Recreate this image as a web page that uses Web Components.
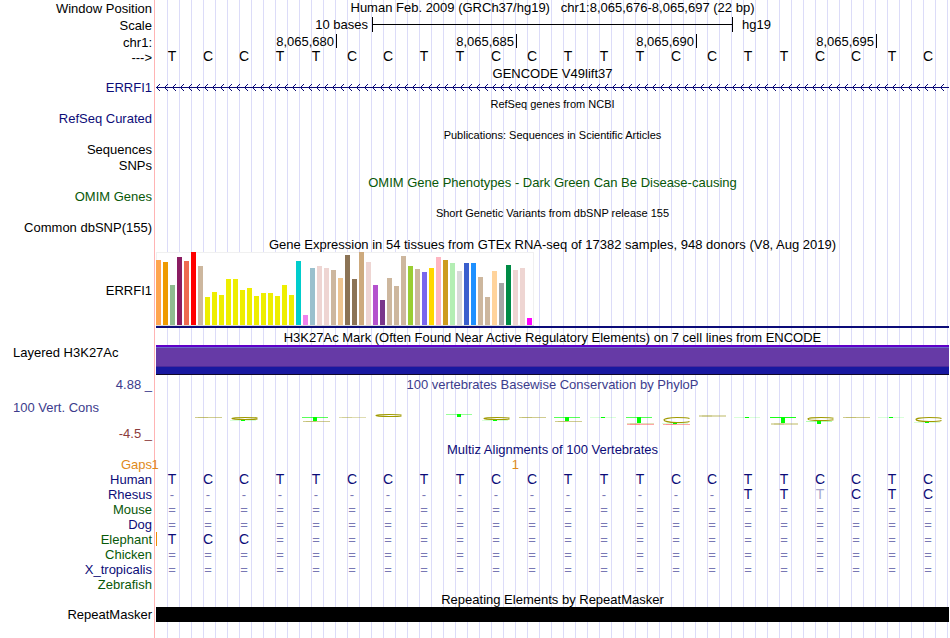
<!DOCTYPE html>
<html lang="en">
<head>
<meta charset="utf-8">
<title>Genome Browser</title>
<style>
body {
    margin: 0;
    background-color: #fff;
    font: 13px/15px "Liberation Sans", Arial, sans-serif;
    color: #000;
}
</style>
</head>
<body>
<genome-browser></genome-browser>

<script>
const COLUMNS = 22;
const SEQUENCE = "TCCTTCCTTCCTTTCCTTCCTC";

function makeTemplate(html) {
    let template = document.createElement("template");
    template.innerHTML = html;
    return template;
}

/* One line of the image: a label on the left, track data on the guide lines */
const rowTemplate = makeTemplate(`
<style>
:host {
    display: grid;
    grid-template-columns: 155px minmax(0, 1fr);
    column-gap: 1px;
    min-height: 15px;
}

:host([size="title"]), :host([size="heading"]) {
    min-height: 16px;
}

:host([size="ruler"]) {
    min-height: 17px;
}

:host([fill]) {
    flex: 1;
}

#label {
    border-right: 1px solid #ffb4b4;
    padding: 0 2px 0 13px;
    text-align: right;
    white-space: nowrap;
    display: flex;
    flex-direction: column;
    justify-content: center;
}

:host([size="ruler"]) #label {
    justify-content: flex-end;
}

:host([size="item"]) #label {
    justify-content: flex-start;
    line-height: 13px;
}

:host([label-align="left"]) #label {
    text-align: left;
    justify-content: flex-start;
}

:host([tone="navy"]) {
    color: #0c0c78;
}

:host([tone="green"]) {
    color: #085808;
}

:host([tone="orange"]) {
    color: #e08a1a;
}

:host([tone="slate"]) {
    color: #3c3c8c;
}

#data {
    position: relative;
    background: linear-gradient(90deg, transparent 11px, #dcdcf8 11px) 0 0 / 12px 100%;
}

:host([size="title"]) #data {
    padding-top: 1px;
    text-align: center;
}

:host([size="heading"]) #data {
    text-align: center;
}

:host([small]) #data {
    font-size: 11px;
}
</style>
<div id="label"><slot name="label"></slot></div>
<div id="data"><slot></slot></div>
`);

class TrackRow extends HTMLElement {
    constructor() {
        super();
        this.attachShadow({mode: "open"});
        this.shadowRoot.appendChild(rowTemplate.content.cloneNode(true));
    }
}

window.customElements.define("track-row", TrackRow);

/* Bases, one per column. Lower case marks a mismatch. */
const basesTemplate = makeTemplate(`
<style>
:host {
    display: grid;
    grid-template-columns: repeat(${COLUMNS}, 1fr);
    padding-right: 1px;
}

:host([raised]) {
    line-height: 13px;
}

span {
    padding-right: 4px;
    text-align: center;
    font-size: 14px;
}

.gap {
    font-size: 13px;
    color: #7878b4;
}

.faint {
    color: #a5a5cd;
}
</style>
`);

class BaseRow extends HTMLElement {
    constructor() {
        super();
        this.attachShadow({mode: "open"});
    }

    connectedCallback() {
        this.shadowRoot.replaceChildren(basesTemplate.content.cloneNode(true));

        for (let base of this.getAttribute("bases")) {
            let cell = document.createElement("span");
            cell.textContent = base.toUpperCase();
            if (base === "-" || base === "=") {
                cell.className = "gap";
            }
            else if (base !== base.toUpperCase()) {
                cell.className = "faint";
            }
            this.shadowRoot.appendChild(cell);
        }
    }
}

window.customElements.define("base-row", BaseRow);

class ScaleBar extends HTMLElement {
    constructor() {
        super();
        this.attachShadow({mode: "open"});
        this.shadowRoot.innerHTML = `
<style>
:host {
    display: grid;
    grid-template-columns: repeat(${COLUMNS}, 1fr);
    align-items: center;
    height: 17px;
    padding-right: 1px;
}

#length {
    grid-column: 1 / 7;
    padding-right: 4px;
    text-align: right;
}

#bar {
    grid-column: 7 / 17;
    height: 15px;
    margin-right: -1px;
    box-sizing: border-box;
    border: solid #000;
    border-width: 0 1px;
    background: linear-gradient(#000, #000) 0 7px / 100% 1px no-repeat;
}

#assembly {
    grid-column: 17 / 23;
    padding-left: 10px;
}
</style>
<span id="length"><slot name="length"></slot></span>
<span id="bar"></span>
<span id="assembly"><slot name="assembly"></slot></span>
`;
    }
}

window.customElements.define("scale-bar", ScaleBar);

class PositionRuler extends HTMLElement {
    constructor() {
        super();
        this.attachShadow({mode: "open"});
        this.shadowRoot.innerHTML = `
<style>
:host {
    display: grid;
    grid-template-columns: repeat(${COLUMNS}, 1fr);
    padding: 1px 1px 0 0;
}

span {
    grid-column: span 5;
    margin-right: -1px;
    padding-right: 2px;
    border-right: 1px solid #000;
    text-align: right;
    line-height: 15px;
    height: 14px;
}
</style>
<span>8,065,680</span>
<span>8,065,685</span>
<span>8,065,690</span>
<span>8,065,695</span>
`;
    }
}

window.customElements.define("position-ruler", PositionRuler);

/* Intron line with arrows for the minus strand */
class GeneLine extends HTMLElement {
    constructor() {
        super();
        this.attachShadow({mode: "open"});
        this.shadowRoot.innerHTML = `
<style>
:host, svg {
    display: block;
}
</style>
<svg width="100%" height="13" shape-rendering="crispEdges" aria-hidden="true">
    <defs>
        <pattern id="arrow" width="8" height="13" patternUnits="userSpaceOnUse">
            <path d="M0 6h8v1h-8z M1 5h1v1h-1z M1 7h1v1h-1z M2 4h1v1h-1z M2 8h1v1h-1z M3 3h1v1h-1z M3 9h1v1h-1z" fill="#0c0c78"/>
        </pattern>
    </defs>
    <rect width="100%" height="13" fill="url(#arrow)"/>
</svg>
`;
    }
}

window.customElements.define("gene-line", GeneLine);

/* GTEx: height and colour of each tissue bar */
const TISSUES = [
    [65, "#ffa54f"], [63, "#ee9a00"], [40, "#8fbc8f"], [68, "#8b1c62"], [64, "#ee6a50"], [73, "#ff0000"],
    [59, "#cdb79e"], [28, "#eeee00"], [33, "#eeee00"], [30, "#eeee00"], [46, "#eeee00"], [46, "#eeee00"],
    [35, "#eeee00"], [37, "#eeee00"], [29, "#eeee00"], [32, "#eeee00"], [32, "#eeee00"], [29, "#eeee00"],
    [40, "#eeee00"], [30, "#eeee00"], [64, "#00cdcd"], [10, "#ee82ee"], [57, "#9ac0cd"], [59, "#eed5d2"],
    [57, "#eed5d2"], [55, "#cdb79e"], [47, "#eec591"], [70, "#8b7355"], [46, "#8b7355"], [73, "#cdaa7d"],
    [63, "#eed5d2"], [40, "#b452cd"], [25, "#7a378b"], [47, "#cdb79e"], [39, "#cdb79e"], [69, "#cdb79e"],
    [59, "#9acd32"], [56, "#cdb79e"], [53, "#7a67ee"], [57, "#ffd700"], [68, "#ffb6c1"], [65, "#cd9b1d"],
    [62, "#b4eeb4"], [54, "#d9d9d9"], [62, "#3a5fcd"], [62, "#1e90ff"], [48, "#cdb79e"], [28, "#cdb79e"],
    [54, "#ffd39b"], [42, "#a6a6a6"], [60, "#008b45"], [55, "#eed5d2"], [57, "#eed5d2"], [7, "#ff00ff"]
];

class ExpressionChart extends HTMLElement {
    constructor() {
        super();
        this.attachShadow({mode: "open"});
    }

    connectedCallback() {
        let bars = TISSUES.map(([height, color], i) =>
            `<rect x="${i * 7}" y="${73 - height}" width="5" height="${height}" fill="${color}"/>`
        ).join("");

        this.shadowRoot.innerHTML = `
<style>
:host {
    display: block;
    height: 77px;
}

svg {
    display: block;
}

#gene {
    height: 2px;
    background-color: #0c0c78;
}
</style>
<svg width="378" height="74" shape-rendering="crispEdges" aria-hidden="true">
    <rect width="378" height="74" fill="#f0f0f0"/>
    <rect x="1" y="1" width="376" height="72" fill="#fff"/>
    <rect y="73" width="378" height="1" fill="#d8d8d8"/>
    ${bars}
</svg>
<div id="gene"></div>
`;
    }
}

window.customElements.define("expression-chart", ExpressionChart);

/* Conservation logo: shapes per column, in a 36 x 49 box */
function thinC(y, height) {
    let middle = y + height / 2;
    let bottom = y + height;
    let bulge = Math.min(1, height / 4);
    return `<path d="M29.5 ${y + bulge} C27 ${y} 22 ${y} 17 ${y} C9 ${y} 4 ${middle - bulge} 4 ${middle} C4 ${middle + bulge} 9 ${bottom} 17 ${bottom} C22 ${bottom} 27 ${bottom} 29.5 ${bottom - bulge}" fill="none" stroke="#a09a00" stroke-width="1.2"/>`;
}

function flat(y, color, height = 1, opacity = 0.5) {
    return `<path d="M3 ${y} h27 v${height} h-27z" fill="${color}" opacity="${opacity}"/>` +
        `<path d="M6 ${y} h10 v${height} h-10z" fill="${color}" opacity="${opacity / 2}"/>`;
}

function tee(y, height, opacity = 0.65) {
    return `<path d="M2 ${y} h26 v1 h-26z" fill="#00ff00" opacity="${opacity}"/>` +
        `<path d="M13 ${y} h4 v${height} h-4z" fill="#00ff00"/>`;
}

const OLIVE = "#a09a20";
const RED = "#ff5050";

const LOGO = {
    1: flat(25, OLIVE),
    2: thinC(25.5, 2) + tee(28, 1, 0.15),
    4: tee(25, 4) + flat(29, OLIVE, 1),
    5: flat(25, OLIVE, 1, 0.35),
    6: thinC(22.5, 2),
    8: tee(22, 3, 0.4),
    9: thinC(25.5, 2) + tee(28, 1, 0.15),
    10: flat(25, OLIVE),
    11: tee(25, 4) + flat(29, OLIVE, 1),
    12: tee(25, 1, 0.15),
    13: tee(25, 6) + flat(31, OLIVE, 1, 0.3) + flat(32, RED),
    14: thinC(25.5, 5) + tee(31, 1, 0.15) + flat(32, RED),
    15: flat(23, OLIVE, 2, 0.35),
    16: tee(25, 1, 0.15),
    17: tee(25, 6, 0.9) + flat(31, OLIVE, 2, 0.35),
    18: thinC(25.5, 3) + tee(29, 3, 0.3),
    19: flat(25, OLIVE),
    20: tee(25, 1, 0.15),
    21: thinC(25.5, 4) + tee(30, 1, 0.15)
};

class ConservationLogo extends HTMLElement {
    constructor() {
        super();
        this.attachShadow({mode: "open"});
    }

    connectedCallback() {
        let cells = "";
        for (let i = 0; i < COLUMNS; i++) {
            cells += `<svg width="36" height="49" aria-hidden="true">${LOGO[i] || ""}</svg>`;
        }

        this.shadowRoot.innerHTML = `
<style>
:host {
    display: grid;
    grid-template-columns: repeat(${COLUMNS}, 1fr);
    padding-right: 1px;
}

svg {
    display: block;
}
</style>
${cells}
`;
    }
}

window.customElements.define("conservation-logo", ConservationLogo);

/* Insert marks stand on the border between two bases */
class InsertMark extends HTMLElement {
    constructor() {
        super();
        this.attachShadow({mode: "open"});
        this.shadowRoot.innerHTML = `
<style>
:host {
    position: absolute;
    top: 0;
    left: calc(var(--before) / ${COLUMNS} * 100%);
    color: #e08a1a;
}

span {
    display: block;
    width: 8px;
    margin-left: -5px;
    text-align: center;
}

:host([line]) {
    width: 1px;
    height: 14px;
    background-color: #f08a00;
}
</style>
<span><slot></slot></span>
`;
    }

    connectedCallback() {
        this.style.setProperty("--before", this.getAttribute("before"));
    }
}

window.customElements.define("insert-mark", InsertMark);

class SignalBand extends HTMLElement {
    constructor() {
        super();
        this.attachShadow({mode: "open"});
        this.shadowRoot.innerHTML = `
<style>
:host {
    display: block;
    height: 15px;
    background-color: #000;
}

:host([kind="histone"]) {
    height: 30px;
    margin-bottom: 1px;
    background: linear-gradient(#6000c8 2px, #6a6ac8 2px 3px, #663aa6 3px 21px, #4a2a9c 21px 22px, #1818a0 22px 29px, #100828 29px);
}
</style>
`;
    }
}

window.customElements.define("signal-band", SignalBand);

const browserTemplate = makeTemplate(`
<style>
:host {
    display: flex;
    flex-direction: column;
    min-height: 100vh;
    padding-right: 1px;
    box-sizing: border-box;
}

.low {
    color: #8c3c3c;
}

.conservation {
    display: flex;
    flex-direction: column;
    justify-content: space-between;
    height: 41px;
    padding-top: 8px;
}

.conservation span {
    text-align: left;
}

.conservation .low {
    text-align: right;
}
</style>
<track-row size="heading">
    <span slot="label">Window Position</span>
    Human Feb. 2009 (GRCh37/hg19) &nbsp; chr1:8,065,676-8,065,697 (22 bp)
</track-row>
<track-row size="ruler">
    <span slot="label">Scale</span>
    <scale-bar><span slot="length">10 bases</span><span slot="assembly">hg19</span></scale-bar>
</track-row>
<track-row size="ruler">
    <span slot="label">chr1:</span>
    <position-ruler></position-ruler>
</track-row>
<track-row>
    <span slot="label">---&gt;</span>
    <base-row raised bases="${SEQUENCE}"></base-row>
</track-row>

<track-row size="title">GENCODE V49lift37</track-row>
<track-row size="item" tone="navy">
    <span slot="label">ERRFI1</span>
    <gene-line></gene-line>
</track-row>

<track-row size="title" small>RefSeq genes from NCBI</track-row>
<track-row size="item" tone="navy"><span slot="label">RefSeq Curated</span></track-row>

<track-row size="title" small>Publications: Sequences in Scientific Articles</track-row>
<track-row size="item" style="min-height: 16px"><span slot="label">Sequences</span></track-row>
<track-row size="item"><span slot="label">SNPs</span></track-row>

<track-row size="title" tone="green">OMIM Gene Phenotypes - Dark Green Can Be Disease-causing</track-row>
<track-row size="item" tone="green"><span slot="label">OMIM Genes</span></track-row>

<track-row size="title" small>Short Genetic Variants from dbSNP release 155</track-row>
<track-row size="item"><span slot="label">Common dbSNP(155)</span></track-row>

<track-row size="title">Gene Expression in 54 tissues from GTEx RNA-seq of 17382 samples, 948 donors (V8, Aug 2019)</track-row>
<track-row>
    <span slot="label">ERRFI1</span>
    <expression-chart></expression-chart>
</track-row>

<track-row size="title">H3K27Ac Mark (Often Found Near Active Regulatory Elements) on 7 cell lines from ENCODE</track-row>
<track-row label-align="left">
    <span slot="label">Layered H3K27Ac</span>
    <signal-band kind="histone"></signal-band>
</track-row>

<track-row size="title" tone="slate">
    <span slot="label">4.88 _</span>
    100 vertebrates Basewise Conservation by PhyloP
</track-row>
<track-row tone="slate">
    <div slot="label" class="conservation"><span>100 Vert. Cons</span><span class="low">-4.5 _</span></div>
    <conservation-logo></conservation-logo>
</track-row>

<track-row size="title" tone="navy">Multiz Alignments of 100 Vertebrates</track-row>
<track-row tone="orange">
    <span slot="label">Gaps</span>
    <insert-mark before="0">1</insert-mark>
    <insert-mark before="10">1</insert-mark>
</track-row>
<track-row tone="navy">
    <span slot="label">Human</span>
    <base-row bases="${SEQUENCE}"></base-row>
</track-row>
<track-row tone="navy">
    <span slot="label">Rhesus</span>
    <base-row bases="----------------TTtCTC"></base-row>
</track-row>
<track-row tone="green">
    <span slot="label">Mouse</span>
    <base-row bases="======================"></base-row>
</track-row>
<track-row tone="navy">
    <span slot="label">Dog</span>
    <base-row bases="======================"></base-row>
</track-row>
<track-row tone="green">
    <span slot="label">Elephant</span>
    <insert-mark line before="0"></insert-mark>
    <base-row style="color: #0c0c78" bases="TCC==================="></base-row>
</track-row>
<track-row tone="green">
    <span slot="label">Chicken</span>
    <base-row bases="======================"></base-row>
</track-row>
<track-row tone="navy">
    <span slot="label">X_tropicalis</span>
    <base-row bases="======================"></base-row>
</track-row>
<track-row tone="green"><span slot="label">Zebrafish</span></track-row>

<track-row style="text-align: center">Repeating Elements by RepeatMasker</track-row>
<track-row>
    <span slot="label">RepeatMasker</span>
    <signal-band></signal-band>
</track-row>
<track-row fill></track-row>
`);

class GenomeBrowser extends HTMLElement {
    constructor() {
        super();
        this.attachShadow({mode: "open"});
        this.shadowRoot.appendChild(browserTemplate.content.cloneNode(true));
    }
}

window.customElements.define("genome-browser", GenomeBrowser);
</script>
</body>
</html>
